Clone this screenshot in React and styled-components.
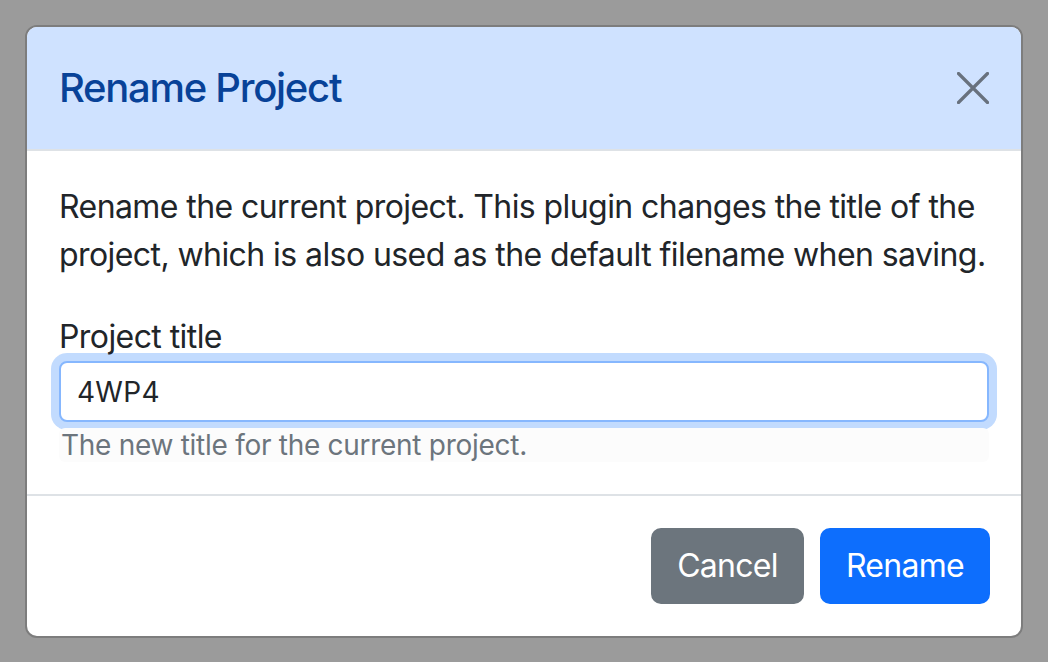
import React, { useState } from 'react';
import styled, { createGlobalStyle } from 'styled-components';

const GlobalStyle = createGlobalStyle`
    html, body {
        margin: 0;
        padding: 0;
        background: #9b9b9b;
    }
    * {
        box-sizing: border-box;
    }
`;

const Backdrop = styled.div`
    height: 662px;
    padding: 25px;
    font-family: Inter, "Liberation Sans", sans-serif;
`;

const Modal = styled.div`
    width: 998px;
    background: #fff;
    border: 2px solid #7d7d7d;
    border-radius: 12px;
    overflow: hidden;
`;

const Header = styled.div`
    display: flex;
    align-items: center;
    justify-content: space-between;
    padding: 32px;
    background: #cfe2ff;
    border-bottom: 2px solid #dee2e6;
`;

const Title = styled.h5`
    margin: 0;
    font-size: 40px;
    line-height: 58px;
    font-weight: 500;
    letter-spacing: -0.032em;
    color: #084298;
`;

const CloseButton = styled.button`
    width: 40px;
    height: 40px;
    padding: 4px;
    margin-right: -4px;
    border: none;
    background: transparent;
    display: flex;
    align-items: center;
    justify-content: center;
    cursor: pointer;
`;

const Body = styled.div`
    padding: 32px 32px 32px;
    color: #212529;
    letter-spacing: -0.036em;
`;

const Text = styled.p`
    margin: 0 0 34px;
    font-size: 32px;
    line-height: 48px;
    white-space: nowrap;
`;

const Label = styled.label`
    display: block;
    font-size: 32px;
    line-height: 48px;
    letter-spacing: -0.018em;
`;

const Input = styled.input`
    display: block;
    width: 100%;
    height: 61px;
    padding: 8px 16px;
    font-family: inherit;
    font-size: 28px;
    letter-spacing: 0.01em;
    color: #212529;
    border: 2px solid #86b7fe;
    border-radius: 8px;
    outline: none;
    box-shadow: 0 0 0 8px rgba(13, 110, 253, 0.25);
`;

const HelpText = styled.div`
    margin-top: 6px;
    padding: 0 2px;
    font-size: 28px;
    line-height: 34px;
    letter-spacing: -0.01em;
    color: #6c757d;
    background: #fcfcfc;
    border-radius: 6px;
`;

const Footer = styled.div`
    display: flex;
    justify-content: flex-end;
    gap: 16px;
    padding: 32px 31px 32px;
    border-top: 2px solid #dee2e6;
`;

const Button = styled.button`
    height: 76px;
    padding: 12px 24px;
    font-family: inherit;
    font-size: 32px;
    line-height: 48px;
    letter-spacing: -0.022em;
    color: #fff;
    border: 2px solid ${({ variant }) => variant === 'primary' ? '#0d6efd' : '#6c757d'};
    background: ${({ variant }) => variant === 'primary' ? '#0d6efd' : '#6c757d'};
    border-radius: 10px;
    cursor: pointer;
`;

const App = () => {
    const [title, setTitle] = useState('4WP4');

    return (
        <>
            <GlobalStyle />
            <Backdrop>
                <Modal>
                    <Header>
                        <Title>Rename Project</Title>
                        <CloseButton aria-label="Close">
                            <svg width="32" height="32" viewBox="0 0 32 32">
                                <path d="M1.5 1.5 L30.5 30.5 M30.5 1.5 L1.5 30.5" stroke="#68717e" strokeWidth="3.2" strokeLinecap="round" />
                            </svg>
                        </CloseButton>
                    </Header>
                    <Body>
                        <Text>
                            Rename the current project. This plugin changes the title of the<br />
                            project, which is also used as the default filename when saving.
                        </Text>
                        <Label htmlFor="title">Project title</Label>
                        <Input id="title" value={title} onChange={e => setTitle(e.target.value)} />
                        <HelpText>The new title for the current project.</HelpText>
                    </Body>
                    <Footer>
                        <Button variant="secondary">Cancel</Button>
                        <Button variant="primary">Rename</Button>
                    </Footer>
                </Modal>
            </Backdrop>
        </>
    );
};

export default App;
